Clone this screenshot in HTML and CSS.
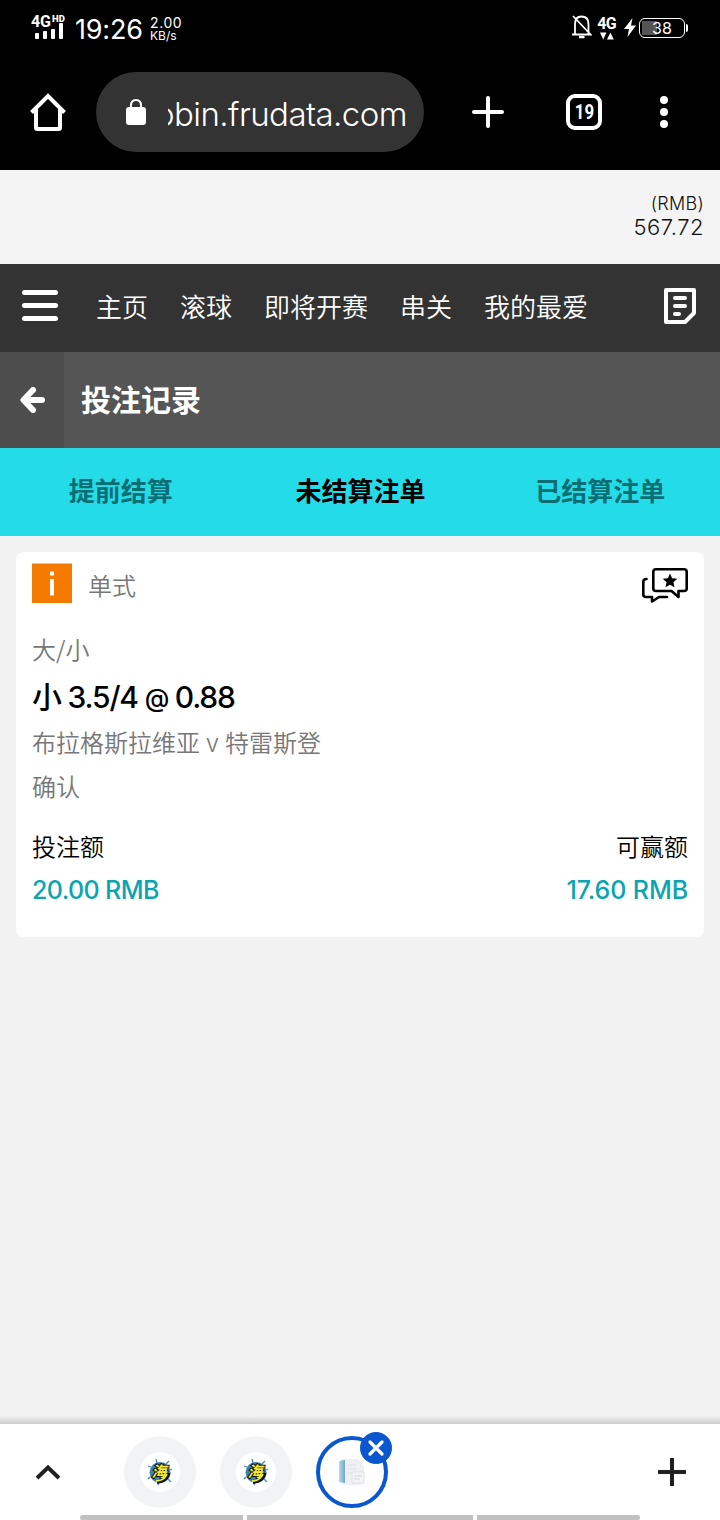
FILE: index.html
```html
<!DOCTYPE html>
<html lang="zh-CN">
<head>
<meta charset="utf-8">
<title>投注记录</title>
<link rel="stylesheet" href="styles.css">
</head>
<body>
<div class="screen">
  <div class="status">
    <div class="signal">
      <div class="net"><span class="net-g">4G</span><span class="net-hd">HD</span></div>
      <div class="bars"><i class="b1"></i><i class="b2"></i><i class="b3"></i><i class="b4"></i></div>
    </div>
    <div class="clock">19:26</div>
    <div class="speed"><span class="rate">2.00</span><span class="unit">KB/s</span></div>
    <div class="status-right">
      <svg class="bell" width="20" height="26" viewBox="0 0 20 26" fill="none" stroke="#fff" stroke-width="1.8"><path d="M3 20V10Q3 2.500 9.500 2.500Q16.500 2.500 16.500 10V20M0 20.500H19M1 2L19.500 21.500"/><path d="M7 23H12.500" stroke-width="2.500"/></svg>
      <div class="data"><span class="data-g">4G</span><svg width="14" height="8" viewBox="0 0 14 8" fill="#fff"><path d="M0 0.500H6.500L3.200 7.500ZM7 7.500H13.800L10.400 0.500Z"/></svg></div>
      <svg class="bolt" width="12" height="19" viewBox="0 0 12 19" fill="#fff"><path d="M8.500 0L0 11H5L3.500 19L12 7.500H7Z"/></svg>
      <div class="battery"><span>38</span></div><i class="battery-tip"></i>
    </div>
  </div>
  <div class="toolbar">
    <svg class="home" width="36" height="38" viewBox="0 0 36 38" fill="none" stroke="#fff" stroke-width="4"><path d="M1.500 19.500L18 3L34.500 19.500"/><path d="M6 16V34.500Q6 36 7.500 36H28.500Q30 36 30 34.500V16"/></svg>
    <div class="omnibox">
      <svg width="20" height="26" viewBox="0 0 20 26"><rect y="8" width="20" height="18" rx="3" fill="#fff"/><path d="M5 9V6.500Q5 1 10 1T15 6.500V9" fill="none" stroke="#fff" stroke-width="2"/></svg>
      <div class="url"><span>obin.frudata.com</span></div>
    </div>
    <svg class="add" width="32" height="32" viewBox="0 0 32 32" stroke="#fff" stroke-width="4" stroke-linecap="round"><path d="M2 16H30M16 2V30"/></svg>
    <div class="tabcount"><span>19</span></div>
    <div class="dots"><i></i><i></i><i></i></div>
  </div>
  <div class="balance"><span class="currency">(RMB)</span><span class="amount">567.72</span></div>
  <div class="nav">
    <div class="burger"><i></i><i></i><i></i></div>
    <div class="links"><a>主页</a><a>滚球</a><a>即将开赛</a><a>串关</a><a>我的最爱</a></div>
    <svg class="slip" width="32" height="36" viewBox="0 0 32 36" fill="none" stroke="#fff" stroke-width="4" stroke-linejoin="round"><path d="M2 2H30V25L21 34H2Z"/><path d="M11 10H21M11 18H21M11 26H15" stroke-linecap="round"/></svg>
  </div>
  <div class="heading">
    <div class="back"><svg width="26" height="26" viewBox="0 0 26 26" fill="none" stroke="#fff" stroke-width="6" stroke-linecap="round" stroke-linejoin="round"><path d="M13 3L3.500 13L13 23M4 13H22"/></svg></div>
    <h1>投注记录</h1>
  </div>
  <div class="tabs"><div class="tab">提前结算</div><div class="tab active">未结算注单</div><div class="tab">已结算注单</div></div>
  <div class="main">
    <div class="card">
      <div class="card-head">
        <svg class="info" width="40" height="40" viewBox="0 0 40 40"><path fill="#f57a00" d="M0 0.500H40V40H0Z"/><path fill="#fff" d="M18 8.500H22V12.500H18ZM18 16H22V32.500H18Z"/></svg>
        <span class="kind">单式</span>
        <svg class="chat" width="46" height="35" viewBox="0 0 46 35" fill="none" stroke="#000" stroke-width="2.600" stroke-linejoin="round" stroke-linecap="round"><path d="M14 1.300H42Q44.700 1.300 44.700 4V20.500Q44.700 23 42 23H36.500V29L29.500 23H14Q11.300 23 11.300 20.500V4Q11.300 1.300 14 1.300Z"/><path d="M4.500 11Q1.300 11 1.300 14V26.500Q1.300 29 4 29H10V33.500L17 29H25"/><path stroke="none" fill="#000" d="M28 5.500L30.100 10.300L35.300 10.800L31.400 14.300L32.500 19.300L28 16.700L23.500 19.300L24.600 14.300L20.700 10.800L25.900 10.300Z"/></svg>
      </div>
      <div class="line market">大/小</div>
      <div class="pick">小 <span>3.5/4</span> <span class="at">@</span> <span>0.88</span></div>
      <div class="line match">布拉格斯拉维亚<span class="versus">v</span>特雷斯登</div>
      <div class="line state">确认</div>
      <div class="totals">
        <div class="total"><span class="label">投注额</span><span class="value stake">20.00 RMB</span></div>
        <div class="total end"><span class="label">可赢额</span><span class="value">17.60 RMB</span></div>
      </div>
    </div>
  </div>
  <div class="bottom-shadow"></div>
  <div class="bottom">
    <svg class="chevron" width="24" height="15" viewBox="0 0 24 15" fill="none" stroke="#202020" stroke-width="4"><path d="M1 13L12 2.500L23 13"/></svg>
    <div class="groups">
      <div class="group"><div class="disc"><svg class="splash" width="28" height="28" viewBox="0 0 28 28"><circle cx="14" cy="14.500" r="10.500" fill="#3d7fb8"/><path d="M11 5L10 1M20 6L23 3M5 9L2 8M4 19L2 21M22 21L25 24M13 24L12 27M24 12L26 11" stroke="#4c83b5" stroke-width="1.300"/><path d="M11 24Q20 24 23 15" fill="none" stroke="#111" stroke-width="3.500"/><text class="hai" x="5.500" y="18.500">海</text><path d="M10 23Q18 23 21 16" fill="none" stroke="#f3eb2c" stroke-width="1.800"/></svg></div></div>
      <div class="group"><div class="disc"><svg class="splash" width="28" height="28" viewBox="0 0 28 28"><circle cx="14" cy="14.500" r="10.500" fill="#3d7fb8"/><path d="M11 5L10 1M20 6L23 3M5 9L2 8M4 19L2 21M22 21L25 24M13 24L12 27M24 12L26 11" stroke="#4c83b5" stroke-width="1.300"/><path d="M11 24Q20 24 23 15" fill="none" stroke="#111" stroke-width="3.500"/><text class="hai" x="5.500" y="18.500">海</text><path d="M10 23Q18 23 21 16" fill="none" stroke="#f3eb2c" stroke-width="1.800"/></svg></div></div>
      <div class="group selected">
        <svg class="paper" width="28" height="28" viewBox="0 0 28 28"><defs><linearGradient id="spine"><stop stop-color="#b9d9ec"/><stop offset="1" stop-color="#6ba6cc"/></linearGradient></defs><path d="M3 1H20L26 8V26Q14 29 3 26Z" fill="#eff0f3"/><path d="M1 3L7 2V25L1 24Z" fill="url(#spine)"/><path d="M9 7H18M9 11H19M9 15H14" stroke="#dfe1e6"/><path d="M14 14H26V25H14Z" fill="#f4f4f6" stroke="#e0e2e6"/><path d="M16 18H24M16 21H22" stroke="#d6d8de"/></svg>
        <div class="close"><svg width="16" height="16" viewBox="0 0 16 16" stroke="#fff" stroke-width="3.200" stroke-linecap="round"><path d="M2 2L14 14M14 2L2 14"/></svg></div>
      </div>
    </div>
    <svg class="new" width="28" height="28" viewBox="0 0 28 28" stroke="#202020" stroke-width="4"><path d="M0 14H28M14 0V28"/></svg>
    <div class="scroll"><i class="s1"></i><i class="s2"></i><i class="s3"></i></div>
  </div>
</div>
</body>
</html>
```
FILE: styles.css
```css
* { box-sizing: border-box; }
body { margin: 0; font-family: Inter, "Noto Sans CJK SC", sans-serif; background: #f2f2f2; }
svg { display: block; flex: none; }
i { display: block; }
.screen { width: 720px; height: 1520px; display: flex; flex-direction: column; overflow: hidden; }
.screen > div { flex: none; }

/* Status bar */
.status { height: 56px; background: #000; color: #fff; display: flex; align-items: flex-start; padding-left: 31px; }
.signal { width: 37px; padding-top: 14px; }
.net { display: flex; height: 14px; }
.net-g { font: 700 16px/15px Roboto, sans-serif; width: 21px; letter-spacing: -.3px; }
.net-hd { font: 900 9.5px/9px Roboto, sans-serif; }
.bars { display: flex; gap: 4px; align-items: flex-end; height: 16px; margin: -5px 0 0 4px; }
.bars i { width: 4px; background: #fff; border-radius: 1px; }
.b1 { height: 6px; }
.b2 { height: 8px; }
.b3 { height: 10px; }
.b4 { height: 16px; }
.clock { width: 81px; padding: 14px 0 0 7px; font-size: 27px; line-height: 32px; letter-spacing: -.2px; white-space: nowrap; }
.speed { display: flex; flex-direction: column; padding: 16px 0 0 1px; }
.rate { font-size: 14px; line-height: 13px; letter-spacing: .6px; }
.unit { font-size: 12px; line-height: 13px; }
.status-right { display: flex; margin-left: auto; padding: 14px 32px 0 0; align-items: flex-start; }
.data { margin: 2px 8px 0 5px; width: 19px; display: flex; flex-direction: column; align-items: center; }
.data-g { font: 700 16px/16px Roboto, sans-serif; letter-spacing: -.8px; }
.bolt { margin: 4px 3px 0 0; }
.battery { margin-top: 4px; width: 46px; height: 20px; border: 1px solid #fff; border-radius: 6px; font-size: 16px; line-height: 18px; text-align: center; background: linear-gradient(#555, #555) 2px 2px / 15px 14px no-repeat; }
.battery-tip { width: 2px; height: 8px; margin: 10px 0 0 1px; background: #fff; border-radius: 0 2px 2px 0; }

/* Browser toolbar */
.toolbar { height: 114px; background: #000; display: flex; align-items: center; padding: 0 0 2px 30px; }
.omnibox { width: 328px; height: 80px; margin-left: 30px; border-radius: 40px; background: #333; display: flex; align-items: center; padding-left: 30px; }
.url { width: 239px; margin-left: 22px; overflow: hidden; display: flex; justify-content: flex-end; color: #fff; font-weight: 300; font-size: 33px; line-height: 44px; letter-spacing: -.55px; padding-top: 4px; white-space: nowrap; }
.add { margin-left: 48px; }
.tabcount { width: 36px; height: 36px; margin-left: 62px; border: 4px solid #fff; border-radius: 9px; color: #fff; font: 700 20px/28px Roboto, sans-serif; display: grid; place-items: center; }
.tabcount span { transform: scaleX(.84); }
.dots { display: grid; gap: 4px; margin-left: 58px; }
.dots i { width: 8px; height: 8px; border-radius: 50%; background: #fff; }

/* Account balance */
.balance { height: 94px; background: #f4f4f4; color: #111; display: flex; flex-direction: column; align-items: flex-end; padding: 22px 16px 0 0; font-weight: 300; }
.currency { font-size: 18px; line-height: 23px; letter-spacing: .3px; }
.amount { font-size: 22px; line-height: 25px; letter-spacing: .5px; }

/* Site navigation */
.nav { height: 88px; background: #333; display: flex; align-items: center; padding: 0 24px 4px 22px; color: #fff; }
.burger { display: grid; gap: 8px; margin-bottom: 1px; }
.burger i { width: 36px; height: 5px; border-radius: 3px; background: #fff; }
.links { display: flex; gap: 32px; margin-left: 38px; font: 350 26px/40px "Noto Sans CJK SC", sans-serif; }
.slip { margin-left: auto; }
.heading { height: 96px; background: #555; display: flex; align-items: center; }
.back { width: 64px; height: 96px; background: #4d4d4d; display: grid; place-items: center; padding-left: 2px; }
h1 { margin: 0 0 4px 17px; font: 700 30px/44px "Noto Sans CJK SC", sans-serif; color: #fff; }
.tabs { height: 88px; display: grid; grid-template-columns: repeat(3, 1fr); background: #24dce8; font: 700 26px/83px "Noto Sans CJK SC", sans-serif; text-align: center; color: #0b6e74; padding-left: 1px; }
.active { color: #000; }

/* Bet card */
.main { height: 880px; padding: 16px; background: #f2f2f2; }
.card { height: 385px; background: #fff; border-radius: 8px; padding: 11px 16px; font-family: "Noto Sans CJK SC", sans-serif; font-weight: 350; font-size: 24px; }
.card-head { height: 64px; display: flex; align-items: flex-start; color: #777; }
.kind { margin-left: 16px; line-height: 43px; }
.chat { margin: 5px 0 0 auto; }
.line { color: #777; line-height: 43px; height: 44px; }
.pick { height: 49px; color: #000; font: 500 30px/52px Inter, "Noto Sans CJK SC", sans-serif; letter-spacing: -1.2px; white-space: nowrap; }
.at { display: inline-block; font-size: 25px; line-height: 30px; vertical-align: 1px; }
.versus { display: inline-block; width: 25px; text-align: center; font-family: Inter, sans-serif; }
.totals { display: flex; justify-content: space-between; padding-top: 16px; }
.total { display: flex; flex-direction: column; line-height: 43px; }
.label { color: #000; }
.value { color: #0aa5b0; font: 500 25px/46px Inter, sans-serif; letter-spacing: -.1px; }
.stake { letter-spacing: -.6px; }
.end { align-items: flex-end; }

/* Tab group strip */
.bottom-shadow { height: 8px; background: linear-gradient(#f2f2f2, #ccc); }
.bottom { height: 96px; background: #fff; display: grid; grid-template: 91px 5px / 24px 264px 1fr; column-gap: 64px; padding: 0 34px 0 36px; align-items: center; }
.bottom > svg { margin-top: 5px; }
.groups { display: flex; gap: 24px; margin-top: 5px; }
.group { width: 72px; height: 72px; flex: none; border-radius: 50%; background: #f2f3f5; display: grid; place-items: center; }
.disc { width: 40px; height: 40px; border-radius: 50%; background: #fff; display: grid; place-items: center; }
.splash { overflow: visible; }
.hai { font: italic 700 15px "Noto Sans CJK SC", sans-serif; fill: #f5ec2e; stroke: #111; stroke-width: 2px; paint-order: stroke; }
.selected { position: relative; background: #fff; border: 4px solid #0b57d0; }
.close { position: absolute; right: -8px; top: -8px; width: 32px; height: 32px; border-radius: 50%; background: #0b57d0; display: grid; place-items: center; }
.new { justify-self: end; }
.scroll { grid-column: 1 / -1; display: flex; gap: 4px; height: 5px; margin-left: 44px; }
.scroll i { height: 5px; background: #c0c0c0; flex: none; }
.scroll .s1 { width: 163px; border-radius: 3px 0 0 3px; }
.scroll .s2 { width: 226px; }
.scroll .s3 { width: 163px; border-radius: 0 3px 3px 0; }
```
